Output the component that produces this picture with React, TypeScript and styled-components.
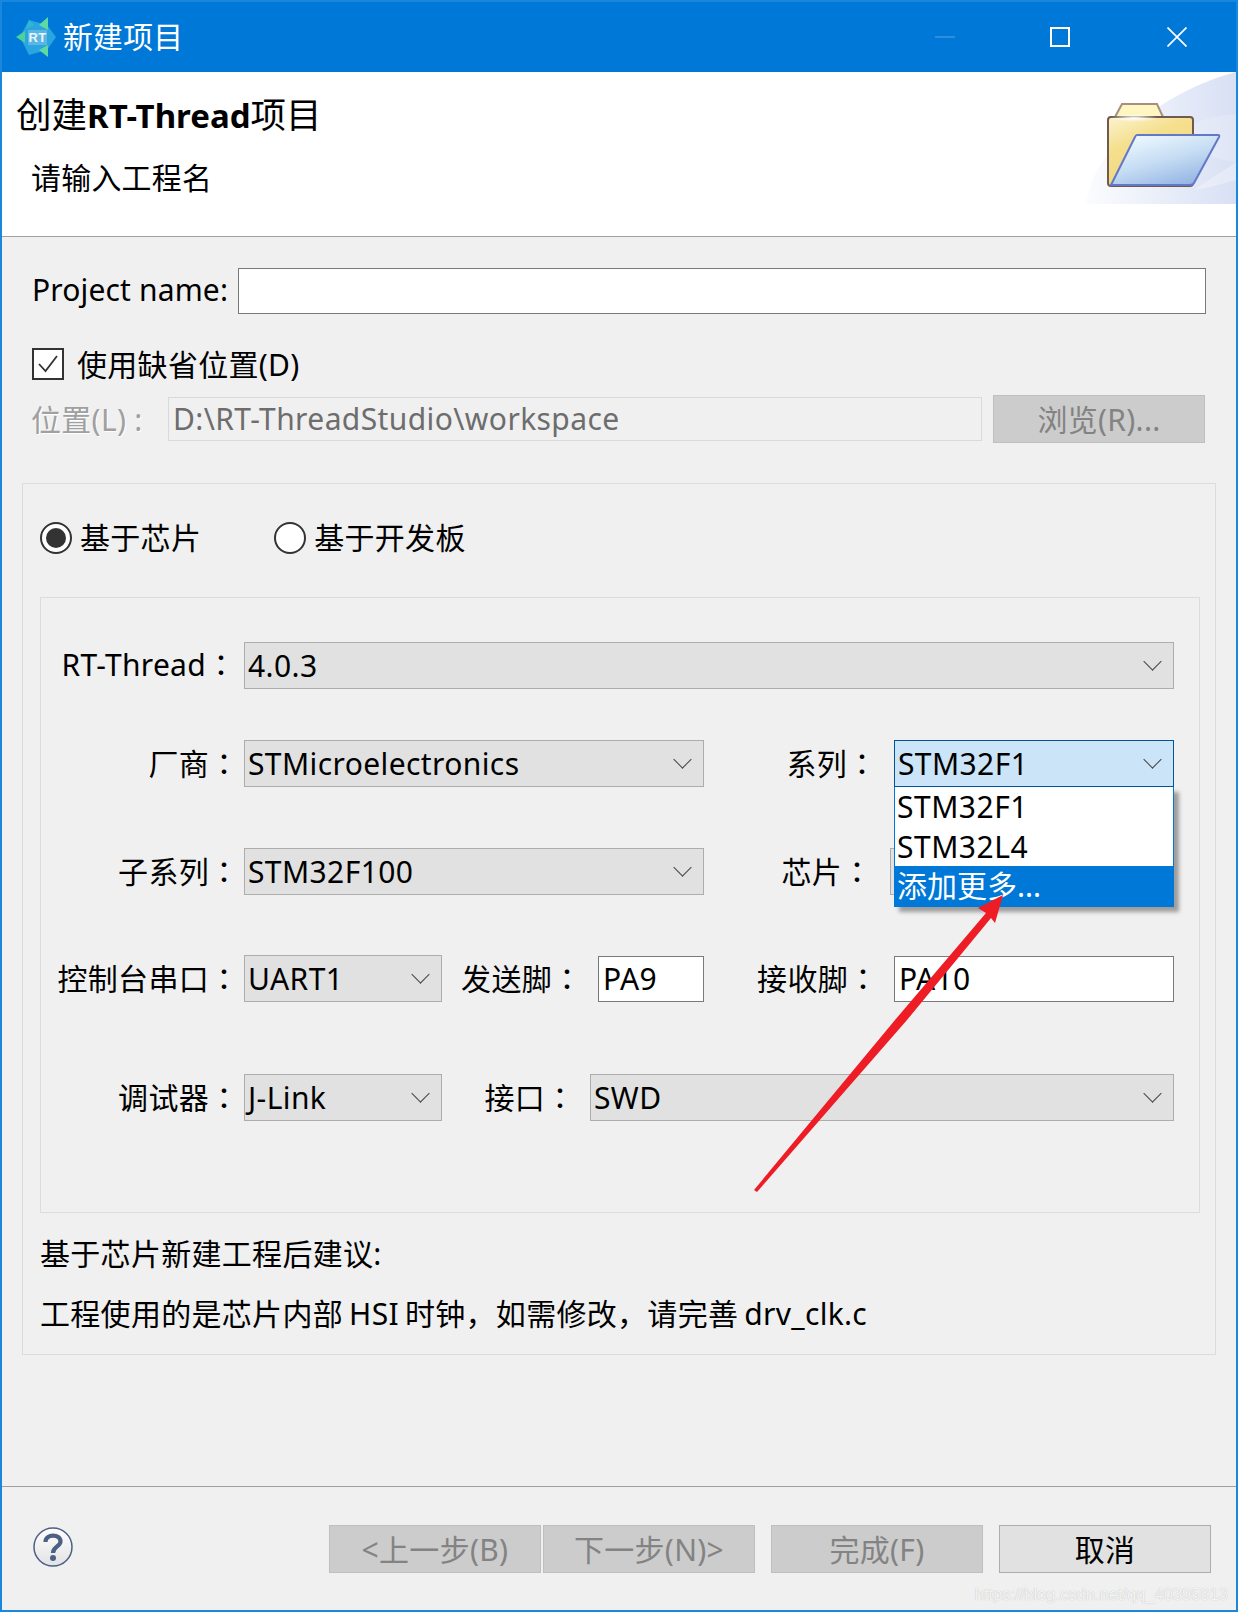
import styled, { createGlobalStyle } from "styled-components";

const GlobalStyle = createGlobalStyle`
  html, body {
    margin: 0;
    padding: 0;
    background: #f0f0f0;
  }
  * {
    box-sizing: border-box;
  }
`;

const UI_FONT = `"Noto Sans", "Noto Sans CJK SC", sans-serif`;

const App = () => {
  return (
    <Dialog>
      <GlobalStyle />
      <TitleBar>
        <LogoMark />
        <TitleText>新建项目</TitleText>
        <WindowButtons />
      </TitleBar>

      <Banner>
        <BannerText>
          <Heading>
            创建<b>RT-Thread</b>项目
          </Heading>
          <SubHeading>请输入工程名</SubHeading>
        </BannerText>
        <FolderArt />
      </Banner>

      <Body>
        <ProjectRow>
          <ProjectLabel>Project name:</ProjectLabel>
          <TextBox $w={968} />
        </ProjectRow>

        <CheckRow>
          <CheckBox>
            <svg width="26" height="26" viewBox="0 0 26 26">
              <path d="M4 13 L10.5 20 L22 5" fill="none" stroke="#333" strokeWidth="1.8" />
            </svg>
          </CheckBox>
          <CheckText>使用缺省位置(D)</CheckText>
        </CheckRow>

        <LocationRow>
          <DisabledLabel>位置(L) :</DisabledLabel>
          <DisabledInput>D:\RT-ThreadStudio\workspace</DisabledInput>
          <DisabledButton $w={212} $ml={11}>
            浏览(R)...
          </DisabledButton>
        </LocationRow>

        <OuterGroup>
          <RadioRow>
            <Radio $checked />
            <RadioText>基于芯片</RadioText>
            <Radio />
            <RadioText>基于开发板</RadioText>
          </RadioRow>

          <InnerGroup>
            <FieldRow $top={44}>
              <FieldLabel $w={195} $raise>
                RT-Thread
                <Colon>：</Colon>
              </FieldLabel>
              <Combo $w={930} $ml={8}>
                4.0.3
              </Combo>
            </FieldRow>

            <FieldRow $top={51}>
              <FieldLabel $w={195}>
                厂商
                <LeftColon>：</LeftColon>
              </FieldLabel>
              <Combo $w={460} $ml={8}>
                STMicroelectronics
              </Combo>
              <FieldLabel $w={173}>
                系列
                <Colon>：</Colon>
              </FieldLabel>
              <DropdownAnchor>
                <Combo $w={280} $ml={17} $open>
                  STM32F1
                </Combo>
                <Menu>
                  <MenuItem $h={40}>STM32F1</MenuItem>
                  <MenuItem $h={39}>STM32L4</MenuItem>
                  <MenuItem $h={40} $selected>
                    添加更多...
                  </MenuItem>
                </Menu>
              </DropdownAnchor>
            </FieldRow>

            <FieldRow $top={61}>
              <FieldLabel $w={195}>
                子系列
                <LeftColon>：</LeftColon>
              </FieldLabel>
              <Combo $w={460} $ml={8}>
                STM32F100
              </Combo>
              <FieldLabel $w={168}>
                芯片
                <Colon>：</Colon>
              </FieldLabel>
              <Combo $w={284} $ml={18} />
            </FieldRow>

            <FieldRow $top={60}>
              <FieldLabel $w={195}>
                控制台串口
                <LeftColon>：</LeftColon>
              </FieldLabel>
              <Combo $w={198} $ml={8}>
                UART1
              </Combo>
              <FieldLabel $w={140}>
                发送脚
                <Colon>：</Colon>
              </FieldLabel>
              <TextBox $w={106} $ml={16}>
                PA9
              </TextBox>
              <FieldLabel $w={174}>
                接收脚
                <Colon>：</Colon>
              </FieldLabel>
              <TextBox $w={280} $ml={16}>
                PA10
              </TextBox>
            </FieldRow>

            <FieldRow $top={72}>
              <FieldLabel $w={195}>
                调试器
                <LeftColon>：</LeftColon>
              </FieldLabel>
              <Combo $w={198} $ml={8}>
                J-Link
              </Combo>
              <FieldLabel $w={133}>
                接口
                <Colon>：</Colon>
              </FieldLabel>
              <Combo $w={584} $ml={15}>
                SWD
              </Combo>
            </FieldRow>
          </InnerGroup>

          <Note>基于芯片新建工程后建议:</Note>
          <Note>工程使用的是芯片内部 HSI 时钟，如需修改，请完善 drv_clk.c</Note>
        </OuterGroup>
      </Body>

      <Footer>
        <HelpIcon />
        <ButtonPair>
          <DisabledButton $w={212}>&lt;上一步(B)</DisabledButton>
          <DisabledButton $w={212}>下一步(N)&gt;</DisabledButton>
        </ButtonPair>
        <DisabledButton $w={212}>完成(F)</DisabledButton>
        <CancelButton>取消</CancelButton>
      </Footer>

      <RedArrow />
      <Watermark>https://blog.csdn.net/qq_40395913</Watermark>
    </Dialog>
  );
};

export default App;

const LogoMark = () => (
  <LogoWrap>
    <svg width="42" height="42" viewBox="0 0 42 42">
      <polygon points="13,3 31,8 40,20 31,33 13,38 4,20" fill="#2aa5df" />
      <polygon points="32,0 32,13 23,8" fill="#5fd9a0" />
      <polygon points="32,40 32,28 23,33" fill="#5fd9a0" />
      <polygon points="0,20 9,14 9,26" fill="#4fcf9a" />
      <polygon points="13,3 18,8 10,12" fill="#2fb7d6" />
      <rect x="12" y="13" width="19" height="15" fill="#5cb6e4" />
    </svg>
    <LogoLetters>RT</LogoLetters>
  </LogoWrap>
);

const WindowButtons = () => (
  <Controls>
    <svg width="20" height="20" viewBox="0 0 20 20">
      <line x1="0" y1="10" x2="20" y2="10" stroke="#3a93e0" strokeWidth="1.6" />
    </svg>
    <svg width="20" height="20" viewBox="0 0 20 20">
      <rect x="1" y="1" width="18" height="18" fill="none" stroke="#fff" strokeWidth="2" />
    </svg>
    <CloseIcon width="20" height="20" viewBox="0 0 20 20">
      <path d="M0.5 0.5 L19.5 19.5 M19.5 0.5 L0.5 19.5" fill="none" stroke="#fff" strokeWidth="1.7" />
    </CloseIcon>
  </Controls>
);

const FolderArt = () => (
  <FolderSvg width="150" height="132" viewBox="0 0 150 132">
    <defs>
      <linearGradient id="swirl" x1="0" y1="0" x2="1" y2="0">
        <stop offset="0" stopColor="#fbfcfe" />
        <stop offset="1" stopColor="#d8e0f4" />
      </linearGradient>
      <linearGradient id="back" x1="0" y1="0" x2="0.5" y2="1">
        <stop offset="0" stopColor="#fbf3cf" />
        <stop offset="0.4" stopColor="#f5e08f" />
        <stop offset="1" stopColor="#f0d67c" />
      </linearGradient>
      <linearGradient id="front" x1="0.2" y1="0" x2="0.8" y2="1">
        <stop offset="0" stopColor="#effaff" />
        <stop offset="0.5" stopColor="#c5dcf3" />
        <stop offset="1" stopColor="#8fb0e2" />
      </linearGradient>
      <radialGradient id="glow">
        <stop offset="0" stopColor="#fff" />
        <stop offset="1" stopColor="#fff" stopOpacity="0" />
      </radialGradient>
    </defs>
    <path d="M0 132 C6 78 74 20 150 0 L150 132 Z" fill="url(#swirl)" />
    <path d="M96 60 C112 46 130 44 150 42 L150 90 C128 88 112 80 96 60 Z" fill="#fff" opacity="0.18" />
    <path d="M108 118 C122 108 136 100 150 90 L150 108 C136 112 122 116 108 118 Z" fill="#fff" opacity="0.3" />
    <polygon points="29,45 36,32 71,32 77,45" fill="#fdf6c0" stroke="#a58f80" strokeWidth="2" />
    <rect x="22" y="45" width="85" height="69" rx="3" fill="url(#back)" stroke="#705a50" strokeWidth="2" />
    <ellipse cx="48" cy="46" rx="24" ry="4" fill="url(#glow)" />
    <path d="M51 63 L132 63 Q134 63 133 65 L108 111 Q107 113 104 113 L25 113 L49 65 Q50 63 51 63 Z" fill="url(#front)" stroke="#6478c8" strokeWidth="2" />
  </FolderSvg>
);

const HelpIcon = () => (
  <HelpSvg width="40" height="40" viewBox="0 0 40 40">
    <defs>
      <linearGradient id="helpFill" x1="0" y1="0" x2="0" y2="1">
        <stop offset="0" stopColor="#ffffff" />
        <stop offset="1" stopColor="#e2e2e4" />
      </linearGradient>
    </defs>
    <circle cx="20" cy="20" r="19" fill="url(#helpFill)" stroke="#4d6185" strokeWidth="1.5" />
    <path d="M12.5 15 C12.5 6.5 27.5 6.5 27.5 14.5 C27.5 19.5 20 19.5 20 26" fill="none" stroke="#4d6185" strokeWidth="4.2" />
    <circle cx="20" cy="31" r="3" fill="#4d6185" />
  </HelpSvg>
);

const RedArrow = () => (
  <ArrowSvg width="320" height="320" viewBox="700 880 320 320">
    <polygon
      points="754,1190 895,1020 986,913 978,908 1003,895 995,923 991,918 907,1020 757,1192"
      fill="#ee1c25"
    />
  </ArrowSvg>
);

const Dialog = styled.div`
  position: relative;
  width: 1238px;
  height: 1612px;
  display: flex;
  flex-direction: column;
  background: #f0f0f0;
  border: 2px solid #1a86dc;
  font-family: ${UI_FONT};
  font-size: 30px;
  letter-spacing: 0.3px;
  color: #000;
  overflow: hidden;
`;

const TitleBar = styled.div`
  height: 70px;
  flex: none;
  display: flex;
  align-items: center;
  background: #0078d7;
  padding-left: 14px;
`;

const LogoWrap = styled.div`
  position: relative;
  width: 42px;
  height: 42px;
  margin-top: 2px;
  svg {
    display: block;
  }
`;

const LogoLetters = styled.span`
  position: absolute;
  left: 12px;
  top: 12px;
  width: 19px;
  text-align: center;
  font-family: "Liberation Sans", sans-serif;
  font-size: 13px;
  line-height: 17px;
  font-weight: bold;
  color: #e8f6fd;
`;

const TitleText = styled.div`
  margin: 0 0 4px 5px;
  font-size: 29.8px;
  color: #fff;
  flex: 1;
`;

const Controls = styled.div`
  display: flex;
  align-items: center;
  gap: 95px;
  padding-right: 49px;
  svg {
    display: block;
  }
`;

const CloseIcon = styled.svg`
  margin-left: 2px;
`;

const Banner = styled.div`
  height: 165px;
  flex: none;
  display: flex;
  background: #fff;
  border-bottom: 1px solid #a0a0a0;
`;

const BannerText = styled.div`
  flex: 1;
  padding: 20px 0 0 14px;
`;

const Heading = styled.div`
  font-size: 35.5px;
  line-height: 44px;
  letter-spacing: 0;
  b {
    font-weight: bold;
    font-size: 33px;
  }
`;

const SubHeading = styled.div`
  font-size: 29.9px;
  line-height: 44px;
  margin: 18px 0 0 15px;
`;

const FolderSvg = styled.svg`
  display: block;
  flex: none;
`;

const Body = styled.div`
  flex: 1;
  min-height: 0;
`;

const ProjectRow = styled.div`
  display: flex;
  align-items: center;
  margin-top: 31px;
  padding-left: 30px;
`;

const ProjectLabel = styled.div`
  width: 206px;
  padding-bottom: 4px;
  white-space: nowrap;
  letter-spacing: 0.15px;
`;

const TextBox = styled.div<{ $w: number; $ml?: number }>`
  width: ${(p) => p.$w}px;
  height: 46px;
  margin-left: ${(p) => p.$ml ?? 0}px;
  flex: none;
  display: flex;
  align-items: center;
  padding-left: 4px;
  background: #fff;
  border: 1px solid #7a7a7a;
`;

const CheckRow = styled.div`
  display: flex;
  align-items: center;
  gap: 13px;
  height: 32px;
  margin-top: 34px;
  padding-left: 30px;
`;

const CheckBox = styled.div`
  width: 32px;
  height: 32px;
  display: flex;
  align-items: center;
  justify-content: center;
  background: #fff;
  border: 2.5px solid #333;
`;

const CheckText = styled.span`
  padding-bottom: 2px;
`;

const LocationRow = styled.div`
  display: flex;
  align-items: center;
  height: 48px;
  margin-top: 15px;
  padding-left: 29px;
`;

const DisabledLabel = styled.div`
  width: 137px;
  flex: none;
  padding-bottom: 2px;
  white-space: nowrap;
  color: #a0a0a0;
  text-shadow: 1px 1px 0 #fff;
`;

const DisabledInput = styled.div`
  width: 814px;
  height: 44px;
  display: flex;
  align-items: center;
  padding: 0 0 2px 4px;
  background: #f0f0f0;
  border: 1px solid #d9d9d9;
  color: #6d6d6d;
  letter-spacing: 0.4px;
`;

const DisabledButton = styled.div<{ $w: number; $ml?: number }>`
  width: ${(p) => p.$w}px;
  height: 48px;
  margin-left: ${(p) => p.$ml ?? 0}px;
  flex: none;
  display: flex;
  align-items: center;
  justify-content: center;
  padding-bottom: 2px;
  background: #cccccc;
  border: 1px solid #bfbfbf;
  color: #838383;
`;

const OuterGroup = styled.div`
  height: 872px;
  margin: 40px 20px 0;
  padding: 38px 15px 0 17px;
  border: 1px solid #dcdcdc;
`;

const RadioRow = styled.div`
  display: flex;
  align-items: center;
  height: 32px;
`;

const Radio = styled.div<{ $checked?: boolean }>`
  position: relative;
  width: 32px;
  height: 32px;
  flex: none;
  background: #fff;
  border: 2px solid #333;
  border-radius: 50%;
  &::after {
    content: "";
    display: ${(p) => (p.$checked ? "block" : "none")};
    width: 20px;
    height: 20px;
    margin: 4px;
    border-radius: 50%;
    background: #333;
  }
`;

const RadioText = styled.div`
  margin-left: 8px;
  margin-right: 73px;
  padding-bottom: 4px;
  white-space: nowrap;
`;

const InnerGroup = styled.div`
  height: 616px;
  margin-top: 43px;
  border: 1px solid #dcdcdc;
`;

const FieldRow = styled.div<{ $top: number }>`
  display: flex;
  align-items: center;
  height: 47px;
  margin-top: ${(p) => p.$top}px;
`;

const FieldLabel = styled.div<{ $w: number; $raise?: boolean }>`
  width: ${(p) => p.$w}px;
  flex: none;
  padding-bottom: ${(p) => (p.$raise ? 3 : 2)}px;
  line-height: 40px;
  text-align: right;
  white-space: nowrap;
`;

const Colon = styled.span`
  font-family: "Noto Sans CJK TC", sans-serif;
  letter-spacing: 0;
`;

const LeftColon = styled(Colon)`
  display: inline-block;
  width: 27px;
  text-align: left;
`;

const Combo = styled.div<{ $w: number; $ml?: number; $open?: boolean }>`
  position: relative;
  width: ${(p) => p.$w}px;
  height: 47px;
  margin-left: ${(p) => p.$ml ?? 0}px;
  flex: none;
  display: flex;
  align-items: center;
  padding-left: 3px;
  background: ${(p) => (p.$open ? "#cce4f7" : "#e1e1e1")};
  border: 1px solid ${(p) => (p.$open ? "#005499" : "#adadad")};
  letter-spacing: 0.4px;
  &::after {
    content: "";
    position: absolute;
    right: 14px;
    top: 12px;
    width: 12px;
    height: 12px;
    border-right: 1.5px solid #444;
    border-bottom: 1.5px solid #444;
    transform: rotate(45deg);
  }
`;

const DropdownAnchor = styled.div`
  position: relative;
  flex: none;
`;

const Menu = styled.div`
  position: absolute;
  z-index: 2;
  left: 17px;
  top: 47px;
  width: 280px;
  background: #fff;
  border: 1px solid #0078d7;
  border-top: none;
  box-shadow: 5px 5px 4px rgba(0, 0, 0, 0.35);
`;

const MenuItem = styled.div<{ $h: number; $selected?: boolean }>`
  height: ${(p) => p.$h}px;
  line-height: ${(p) => p.$h}px;
  padding-left: 2px;
  white-space: nowrap;
  letter-spacing: ${(p) => (p.$selected ? 0 : 0.5)}px;
  background: ${(p) => (p.$selected ? "#0078d7" : "#fff")};
  color: ${(p) => (p.$selected ? "#fff" : "#000")};
`;

const Note = styled.div`
  height: 40px;
  line-height: 40px;
  margin-top: 21px;
  white-space: nowrap;
  word-spacing: -2px;
  & + & {
    margin-top: 20px;
  }
`;

const Footer = styled.div`
  flex: none;
  height: 124px;
  display: flex;
  gap: 16px;
  padding: 38px 25px 0 31px;
  border-top: 1px solid #a0a0a0;
`;

const HelpSvg = styled.svg`
  display: block;
  margin: 2px auto 0 0;
`;

const ButtonPair = styled.div`
  display: flex;
  gap: 2px;
`;

const CancelButton = styled.div`
  width: 212px;
  height: 48px;
  display: flex;
  align-items: center;
  justify-content: center;
  padding-bottom: 2px;
  background: #e1e1e1;
  border: 1px solid #adadad;
`;

const ArrowSvg = styled.svg`
  position: absolute;
  z-index: 3;
  left: 698px;
  top: 878px;
  pointer-events: none;
`;

const Watermark = styled.div`
  position: absolute;
  right: 8px;
  bottom: 6px;
  font-family: "Liberation Sans", sans-serif;
  font-size: 16.5px;
  letter-spacing: 0;
  color: rgba(255, 255, 255, 0.85);
  text-shadow: 0 0 1px rgba(150, 150, 150, 0.7);
  white-space: nowrap;
`;
